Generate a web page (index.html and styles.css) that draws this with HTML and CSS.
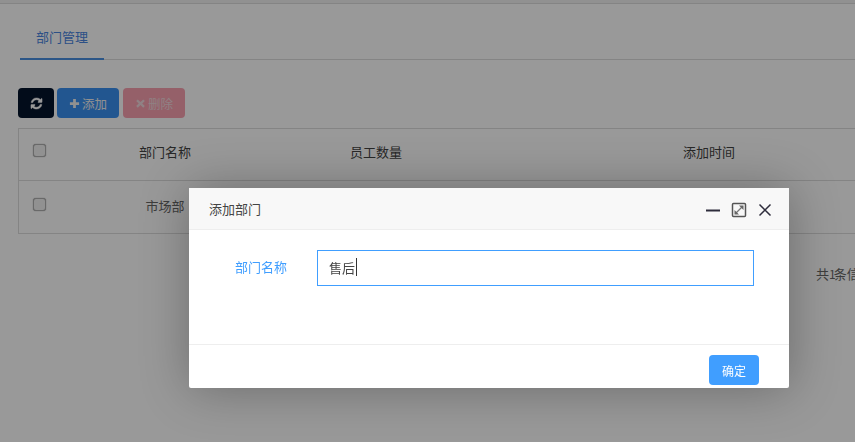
FILE: index.html
```html
<!DOCTYPE html>
<html lang="zh">
<head>
<meta charset="utf-8">
<title>部门管理</title>
<link rel="stylesheet" href="styles.css">
</head>
<body>
<div class="page">
  <div class="topline"></div>
  <nav class="tabs"><a class="tab">部门管理</a></nav>
  <div class="toolbar">
    <button class="btn btn-dark"><svg class="ico" viewBox="0 0 1792 1792"><path d="M1639 1056q0 5-1 7-64 268-268 434.5t-478 166.5q-146 0-282.5-55t-243.5-157l-129 129q-19 19-45 19t-45-19-19-45v-448q0-26 19-45t45-19h448q26 0 45 19t19 45-19 45l-137 137q71 66 161 102t187 36q134 0 250-65t186-179q11-17 53-117 8-23 30-23h192q13 0 22.5 9.5t9.5 22.5zm25-800v448q0 26-19 45t-45 19h-448q-26 0-45-19t-19-45 19-45l138-138q-148-137-349-137-134 0-250 65t-186 179q-11 17-53 117-8 23-30 23h-199q-13 0-22.5-9.5t-9.5-22.5v-7q65-268 270-434.5t480-166.5q146 0 284 55.5t245 156.5l130-129q19-19 45-19t45 19 19 45z"/></svg></button>
    <button class="btn btn-blue"><svg class="ico-sm" viewBox="0 0 12 12"><path d="M4.500 1h3v3.500H11v3H7.500V11h-3V7.500H1v-3h3.500z"/></svg>添加</button>
    <button class="btn btn-red"><svg class="ico-sm" viewBox="0 0 12 12"><path d="M3 1.500 6 4.300l3-2.800L10.700 3.200 7.900 6l2.800 2.800L9 10.500 6 7.700l-3 2.800L1.300 8.800 4.100 6 1.300 3.200z"/></svg>删除</button>
  </div>
  <div class="table">
    <div class="row head">
      <div class="cell"><span class="check"></span></div>
      <div class="cell">部门名称</div>
      <div class="cell">员工数量</div>
      <div class="cell">添加时间</div>
    </div>
    <div class="row">
      <div class="cell"><span class="check"></span></div>
      <div class="cell name">市场部</div>
      <div class="cell"></div>
      <div class="cell"></div>
    </div>
  </div>
  <div class="pager">共<span class="num">1</span>条信息</div>
</div>
<div class="shade"></div>
<section class="modal">
  <header class="modal-head">
    <h2 class="modal-title">添加部门</h2>
    <div class="modal-tools">
      <svg class="tool" viewBox="0 0 16 16"><path class="min" d="M1 8.500h14"/></svg>
      <svg class="tool" viewBox="0 0 16 16"><rect class="frame" x="1.500" y="1.500" width="13" height="13" rx="1"/><path class="arrow" d="M4.500 11.500 11.500 4.500"/><path class="tip" d="M8 3.500h4.500V8zM3.500 8v4.500H8z"/></svg>
      <svg class="tool" viewBox="0 0 16 16"><path class="close" d="M2.500 2.500 13.500 13.500M13.500 2.500 2.500 13.500"/></svg>
    </div>
  </header>
  <div class="modal-body">
    <label class="field-label">部门名称</label>
    <div class="field-input">售后<span class="caret"></span></div>
  </div>
  <footer class="modal-foot"><button class="ok">确定</button></footer>
</section>
</body>
</html>
```
FILE: styles.css
```css
* { box-sizing: border-box; }
html, body { margin: 0; height: 100%; overflow: hidden; }
body {
  width: 855px;
  height: 442px;
  background: #fff;
  font-family: "Noto Sans CJK SC", "Noto Sans", sans-serif;
  font-size: 13px;
  color: #444;
}
.page { width: 1000px; padding-top: 0; }
.topline { height: 4px; background: #f2f2f2; border-bottom: 1px solid #ddd; }
.tabs { margin: 0 0 0 20px; height: 56px; border-bottom: 1px solid #ddd; width: 980px; display: flex; }
.tab {
  width: 84px;
  height: 56px;
  line-height: 66px;
  text-align: center;
  color: #4a86e0;
  border-bottom: 2px solid #4a90e2;
}
.toolbar { display: flex; gap: 3px; margin: 28px 0 0 18px; }
.btn {
  height: 30px;
  border: 0;
  border-radius: 4px;
  color: #fff;
  font: inherit;
  font-size: 12.500px;
  padding: 0;
  display: flex;
  align-items: center;
  justify-content: center;
}
.btn-dark { width: 36px; background: #04142c; }
.btn-blue { width: 62px; background: #3a90f0; margin-right: 1px; color: #f0f0f0; }
.btn-red { width: 62px; background: #f8a0b0; color: #f0d8dc; }
.ico { width: 13px; height: 13px; fill: #fff; stroke: #fff; stroke-width: 60; }
.ico-sm { width: 11px; height: 11px; fill: currentColor; margin-right: 2px; }
.table { margin: 10px 0 0 18px; width: 960px; border: 1px solid #ddd; }
.row { display: grid; grid-template-columns: 59px 174px 248px 418px; height: 52px; border-bottom: 1px solid #ddd; }
.row:last-child { border-bottom: 0; height: 52px; }
.head { color: #444; }
.cell { display: flex; align-items: center; justify-content: center; }
.head .cell { padding-bottom: 6px; }
.name { color: #666; padding-bottom: 3px; }
.check {
  width: 13px; height: 13px;
  border: 1px solid #b0b0b0;
  border-radius: 3px;
  background: #f2f2f2;
  box-shadow: 0 0 1px #777;
  margin: -6px 0 0 -19px;
  display: block;
}
.head .check { margin-top: -2px; }
.pager { margin: 30px 0 0 816px; line-height: 19px; color: #666; }
.num { letter-spacing: -3px; margin-right: 1px; font-size: 12px; }
.shade { position: fixed; inset: 0; background: rgba(0, 0, 0, .4); }
.modal {
  position: absolute;
  left: 189px;
  top: 188px;
  width: 600px;
  height: 200px;
  background: #fff;
  border-radius: 2px;
  box-shadow: 1px 1px 50px rgba(0, 0, 0, .3);
  display: flex;
  flex-direction: column;
}
.modal-head {
  height: 42px;
  background: #f8f8f8;
  border-bottom: 1px solid #eee;
  display: flex;
  align-items: center;
  justify-content: space-between;
  padding: 0 16px 0 20px;
}
.modal-title { margin: 0; font-weight: 400; font-size: 13px; color: #444; }
.modal-tools { display: flex; gap: 10px; align-items: center; margin-top: 2px; }
.tool { width: 16px; height: 16px; display: block; fill: none; }
.min { stroke: #2e2d3c; stroke-width: 2; }
.frame { stroke: #555; stroke-width: 1.500; }
.arrow { stroke: #777; stroke-width: 1.200; }
.tip { fill: #666; }
.close { stroke: #2e2d3c; stroke-width: 1.500; }
.modal-body { flex: 1; display: flex; align-items: flex-start; padding: 20px 0 0 46px; }
.field-label { width: 82px; line-height: 34px; color: #409eff; }
.field-input {
  width: 437px;
  height: 36px;
  border: 1px solid #409eff;
  padding: 0 0 2px 11px;
  color: #444;
  display: flex;
  align-items: center;
}
.caret { display: block; width: 1px; height: 18px; background: #333; margin-left: 1px; }
.modal-foot {
  height: 44px;
  border-top: 1px solid #eee;
  display: flex;
  justify-content: flex-end;
  padding: 10px 30px 0 0;
}
.ok {
  width: 50px;
  height: 30px;
  border: 0;
  border-radius: 4px;
  background: #409eff;
  color: #fff;
  font: inherit;
  font-size: 12px;
  padding: 0;
}
```
